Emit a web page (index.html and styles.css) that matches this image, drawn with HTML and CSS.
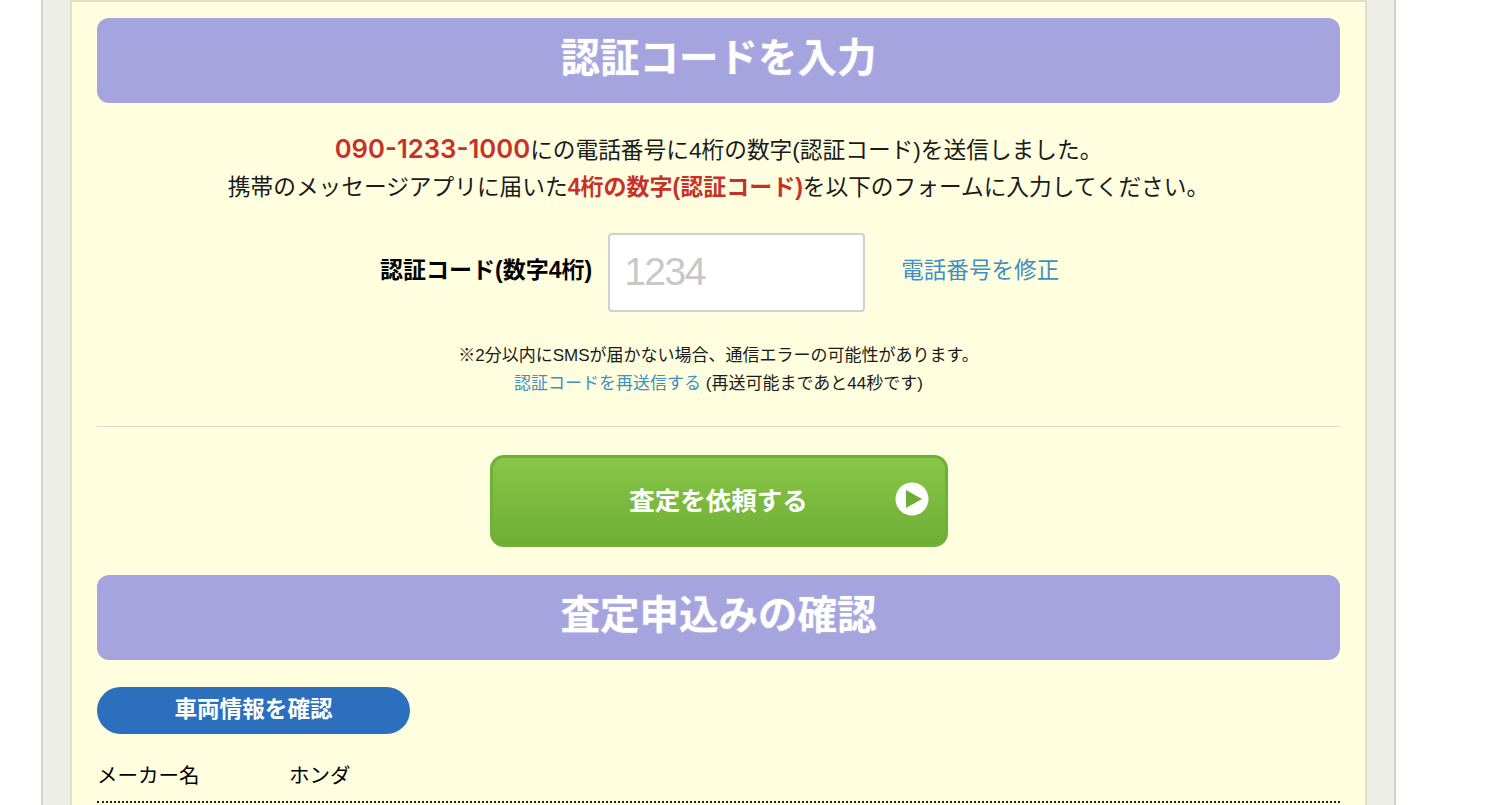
FILE: index.html
```html
<!DOCTYPE html>
<html lang="ja">
<head>
    <meta charset="UTF-8">
    <meta name="viewport" content="width=device-width, initial-scale=1.0">
    <title>認証コードを入力</title>
    <link rel="stylesheet" href="styles.css">
</head>
<body>
    <div class="outer-frame">
        <div class="form-box">
            <h2 class="section-title">認証コードを入力</h2>

            <div class="sent-message">
                <p><span class="tel-number">090-1233-1000</span>にの電話番号に4桁の数字(認証コード)を送信しました。</p>
                <p>携帯のメッセージアプリに届いた<span class="em-red">4桁の数字(認証コード)</span>を以下のフォームに入力してください。</p>
            </div>

            <div class="code-row">
                <label class="code-label" for="code">認証コード(数字4桁)</label>
                <input id="code" class="code-input" type="text" placeholder="1234">
                <a class="fix-link" href="#">電話番号を修正</a>
            </div>

            <div class="resend-note">
                <p>※2分以内にSMSが届かない場合、通信エラーの可能性があります。</p>
                <p><a href="#">認証コードを再送信する</a> (再送可能まであと44秒です)</p>
            </div>

            <hr class="divider">

            <div class="submit-wrap">
                <button class="submit-btn" type="button">
                    <span>査定を依頼する</span>
                    <svg class="submit-icon" width="34" height="34" viewBox="0 0 34 34">
                        <circle cx="17" cy="17" r="16.5" fill="#fff"/>
                        <path d="M11 8 L27 17 L11 26 Z" fill="#6cae35"/>
                    </svg>
                </button>
            </div>

            <h2 class="section-title">査定申込みの確認</h2>

            <div class="sub-title">車両情報を確認</div>

            <dl class="info-row">
                <dt>メーカー名</dt>
                <dd>ホンダ</dd>
            </dl>
        </div>
    </div>
</body>
</html>
```

FILE: styles.css
```css
* {
    box-sizing: border-box;
}

html, body {
    height: 805px;
    overflow: hidden;
}

body {
    margin: 0;
    background: #fff;
    font-family: "Liberation Sans", "Noto Sans CJK JP", sans-serif;
    color: #1a1a1a;
}

p {
    margin: 0;
}

a {
    color: #3f8fc4;
    text-decoration: none;
}

.outer-frame {
    width: 1355px;
    height: 805px;
    margin-left: 41px;
    padding: 0 27px;
    background: #eeeee9;
    border-left: 2px solid #d2d2cc;
    border-right: 2px solid #d2d2cc;
}

.form-box {
    height: 805px;
    padding: 16px 25px 0;
    background: #ffffdf;
    border: 2px solid #e0dfca;
    border-bottom: none;
}

.section-title {
    margin: 0;
    height: 85px;
    line-height: 81px;
    text-align: center;
    font-size: 39.5px;
    font-weight: bold;
    color: #fff;
    background: #a5a4de;
    border-radius: 12px;
    text-shadow: 0 0 2px rgba(255, 255, 255, 0.35);
}

.sent-message {
    margin-top: 29px;
    text-align: center;
    font-size: 22.7px;
    line-height: 37px;
}

.tel-number {
    font-family: Inter, "Liberation Sans", sans-serif;
    font-size: 25.7px;
    font-weight: 600;
    line-height: 1;
    color: #c8312a;
}

.em-red {
    font-size: 23px;
    font-weight: bold;
    color: #c8312a;
}

.code-row {
    display: flex;
    align-items: center;
    margin-top: 27px;
    padding-left: 283px;
}

.code-label {
    padding-bottom: 9px;
    font-size: 23px;
    font-weight: bold;
    color: #000;
}

.code-input {
    width: 257px;
    height: 79px;
    margin-left: 16px;
    padding: 0 14px 1px;
    font-family: inherit;
    font-size: 39px;
    letter-spacing: -1.5px;
    background: #fff;
    border: 2px solid #d0d0d0;
    border-radius: 4px;
}

.code-input::placeholder {
    color: #c8c8c8;
    opacity: 1;
}

.fix-link {
    margin-left: 36px;
    padding-bottom: 9px;
    font-size: 22.6px;
}

.resend-note {
    margin-top: 30px;
    text-align: center;
    font-size: 17px;
    line-height: 28px;
}

.divider {
    margin: 28px 0 0;
    border: none;
    border-top: 1px solid #d9d9c6;
}

.submit-wrap {
    display: flex;
    justify-content: center;
    margin: 28px 0;
}

.submit-btn {
    position: relative;
    width: 458px;
    height: 92px;
    padding-bottom: 6px;
    font-family: inherit;
    font-size: 25.5px;
    font-weight: bold;
    color: #fff;
    background: linear-gradient(#88c647, #6fae36);
    border: 3px solid #6fb038;
    border-radius: 14px;
}

.submit-icon {
    position: absolute;
    top: 24px;
    right: 16px;
}

.sub-title {
    width: 313px;
    height: 47px;
    margin-top: 27px;
    line-height: 46px;
    text-align: center;
    font-size: 22.6px;
    font-weight: bold;
    color: #fff;
    background: #2b6fbd;
    border-radius: 24px;
}

.info-row {
    display: flex;
    align-items: center;
    height: 69px;
    margin: 0;
    padding-top: 13px;
    font-size: 20.5px;
    color: #000;
    border-bottom: 2px dotted #222;
}

.info-row dt {
    width: 192px;
}

.info-row dd {
    margin: 0;
}
```
